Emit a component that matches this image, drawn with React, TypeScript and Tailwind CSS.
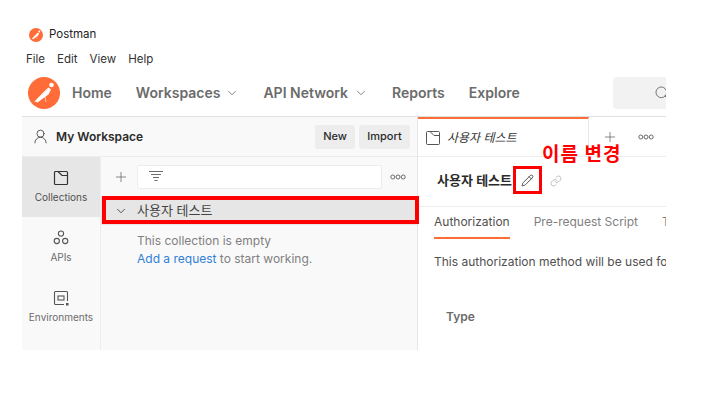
import { Search, ChevronDown, Plus, Link, Pencil, UserRound } from 'lucide-react'

const font = "[font-family:Inter,'Noto_Sans_CJK_KR',sans-serif]"

function Logo({ size }: { size: number }) {
  return (
    <svg width={size} height={size} viewBox="0 0 32 32">
      <circle cx="16" cy="16" r="16" fill="#ff6c37" />
      <path d="M6.5 24.5 L16 14.5 L20.5 10.5 L23 12.5 L20.5 17.5 L17 20 L9.5 25.5 Z" fill="#fff" />
      <circle cx="23.5" cy="8" r="2.3" fill="#fff" />
      <path d="M17 20 L18 25 M14 18 L19 13" stroke="#ffd9cb" strokeWidth="0.8" fill="none" />
    </svg>
  )
}

function CollectionIcon() {
  return (
    <svg width="16" height="16" viewBox="0 0 16 16" fill="none" stroke="#333" strokeWidth="1.2">
      <rect x="1.5" y="1.5" width="13" height="13" rx="1" />
      <path d="M5 1.5 L9 5.5 H14.5" />
    </svg>
  )
}

function ApisIcon() {
  return (
    <svg width="16" height="16" viewBox="0 0 16 16" fill="none" stroke="#555" strokeWidth="1.1">
      <circle cx="8" cy="3.6" r="2.6" />
      <circle cx="3.8" cy="11" r="2.6" />
      <circle cx="12.2" cy="11" r="2.6" />
    </svg>
  )
}

function EnvIcon() {
  return (
    <svg width="16" height="16" viewBox="0 0 16 16" fill="none" stroke="#555" strokeWidth="1.1">
      <path d="M11 14.5 H2.5 a1 1 0 0 1 -1 -1 V2.5 a1 1 0 0 1 1 -1 H13.5 a1 1 0 0 1 1 1 V11" />
      <rect x="5" y="6" width="6" height="4" />
      <rect x="13" y="13" width="2.5" height="2.5" fill="#555" stroke="none" />
    </svg>
  )
}

function FilterIcon() {
  return (
    <svg width="16" height="14" viewBox="0 0 16 14" stroke="#6b6b6b" strokeWidth="1">
      <path d="M1 1.5 H15 M3 4.5 H13 M5 7.5 H11 M6.5 10.5 H9.5" />
    </svg>
  )
}

function Dots() {
  return (
    <svg width="16" height="6" viewBox="0 0 16 6" fill="none" stroke="#6b6b6b" strokeWidth="1">
      <circle cx="2.8" cy="3" r="2" />
      <circle cx="8" cy="3" r="2" />
      <circle cx="13.2" cy="3" r="2" />
    </svg>
  )
}

function SideItem({ icon, label, active }: { icon: React.ReactNode; label: string; active?: boolean }) {
  return (
    <div className={`h-[60px] flex flex-col items-center pt-[13px] gap-[4px] ${active ? 'bg-[#e6e6e6]' : ''}`}>
      {icon}
      <span className={`text-[10px] leading-[14px] ${active ? 'text-[#505050]' : 'text-[#6b6b6b]'}`}>{label}</span>
    </div>
  )
}

export default function App() {
  return (
    <div className={`relative w-[706px] h-[400px] bg-white overflow-hidden ${font}`}>
      <div className="ml-[22px] w-[644px]">
        <div className="h-[42px] flex items-end pl-[7px] gap-[6px]">
          <Logo size={14} />
          <span className="text-[11.5px] leading-[16px] text-[#222]">Postman</span>
        </div>
        <div className="h-[28px] pl-[4px] pt-[9px] flex gap-[12px] text-[11.5px] leading-[16px] text-[#333]">
          <span>File</span>
          <span>Edit</span>
          <span>View</span>
          <span>Help</span>
        </div>

        <nav className="h-[47px] flex items-center pl-[6px] border-b border-[#e0e0e0] overflow-hidden">
          <Logo size={32} />
          <div className="ml-[12px] pb-[1px] flex items-center text-[14px] font-semibold text-[#6b6b6b] whitespace-nowrap">
            <span>Home</span>
            <span className="ml-[24px]">Workspaces</span>
            <ChevronDown size={14} strokeWidth={1.2} className="ml-[5px] text-[#555]" />
            <span className="ml-[24px]">API Network</span>
            <ChevronDown size={14} strokeWidth={1.2} className="ml-[6px] text-[#555]" />
            <span className="ml-[24px]">Reports</span>
            <span className="ml-[24px]">Explore</span>
          </div>
          <div className="ml-auto w-[53px] h-[32px] bg-[#f2f2f2] rounded-l-[4px] flex items-center justify-end overflow-hidden">
            <Search size={16} strokeWidth={1.2} className="text-[#555] -mr-[4px] shrink-0" />
          </div>
        </nav>

        <div className="flex h-[233px]">
          <aside className="w-[396px] bg-[#f9f9f9] border-r border-[#e6e6e6] flex flex-col">
            <div className="h-[40px] flex items-center pl-[10px] pr-[7px] border-b border-[#ededed]">
              <UserRound size={17} strokeWidth={1.1} className="text-[#333]" />
              <span className="ml-[7px] text-[12px] font-semibold text-[#2b2b2b]">My Workspace</span>
              <button className="ml-auto h-[24px] w-[40px] rounded-[3px] bg-[#ededed] text-[11px] font-medium text-[#2b2b2b]">New</button>
              <button className="ml-[4px] h-[24px] w-[51px] rounded-[3px] bg-[#ededed] text-[11px] font-medium text-[#2b2b2b]">Import</button>
            </div>
            <div className="flex flex-1">
              <div className="w-[79px] border-r border-[#ededed]">
                <SideItem icon={<CollectionIcon />} label="Collections" active />
                <SideItem icon={<ApisIcon />} label="APIs" />
                <SideItem icon={<EnvIcon />} label="Environments" />
              </div>
              <div className="flex-1">
                <div className="h-[40px] flex items-center pl-[12px] pr-[11px]">
                  <Plus size={16} strokeWidth={1.3} className="text-[#777]" />
                  <div className="ml-[8px] w-[245px] h-[24px] bg-white border border-[#ededed] rounded-[2px] flex items-center pl-[10px]">
                    <FilterIcon />
                  </div>
                  <div className="ml-auto"><Dots /></div>
                </div>
                <div className="h-[28px] bg-[#e6e6e6] flex items-center pl-[13px]">
                  <ChevronDown size={14} strokeWidth={1.3} className="text-[#222]" />
                  <span className="ml-[9px] text-[13px] text-[#444]">사용자 테스트</span>
                </div>
                <div className="pl-[36px] pt-[7px] text-[12px] leading-[18px] text-[#808080]">
                  <p>This collection is empty</p>
                  <p><span className="text-[#2f80d8]">Add a request</span> to start working.</p>
                </div>
              </div>
            </div>
          </aside>

          <main className="flex-1 min-w-0 overflow-hidden">
            <div className="h-[40px] flex items-center border-b border-[#ededed]">
              <div className="w-[171px] h-[40px] border-t-2 border-[#ff6c37] border-r border-r-[#e6e6e6] flex items-center pl-[8px] gap-[7px]">
                <svg width="14" height="14" viewBox="0 0 14 14" fill="none" stroke="#555" strokeWidth="1">
                  <rect x="0.5" y="0.5" width="13" height="13" rx="1" />
                  <path d="M4 0.5 L8 4.5 H13.5" />
                </svg>
                <span className="text-[12px] italic text-[#333]">사용자 테스트</span>
              </div>
              <Plus size={16} strokeWidth={1.3} className="ml-[13px] text-[#777]" />
              <div className="ml-[20px]"><Dots /></div>
            </div>
            <div className="h-[50px] flex items-center pl-[19px] pb-[2px] border-b border-[#ededed]">
              <span className="text-[13px] font-semibold text-[#2b2b2b]">사용자 테스트</span>
              <Pencil size={13} strokeWidth={1.4} className="ml-[9px] text-[#222]" />
              <Link size={12} strokeWidth={1.2} className="ml-[16px] text-[#999]" />
            </div>
            <div className="h-[32px] flex pl-[16px] text-[12px] whitespace-nowrap">
              <span className="h-[32px] pt-[6px] border-b-2 border-[#ff6c37] text-[#505050]">Authorization</span>
              <span className="ml-[24px] pt-[6px] text-[#808080]">Pre-request Script</span>
              <span className="ml-[24px] pt-[6px] text-[#808080]">Tests</span>
            </div>
            <p className="pl-[16px] pt-[14px] text-[12px] leading-[18px] text-[#505050] whitespace-nowrap">This authorization method will be used for every request in this collection.</p>
            <p className="pl-[28px] pt-[38px] text-[12px] leading-[16px] font-semibold text-[#6b6b6b]">Type</p>
          </main>
        </div>
      </div>

      {/* red annotations on top of the screenshot */}
      <div className="absolute left-[102px] top-[196px] w-[317px] h-[28px] border-[4px] border-[#ff0000]" />
      <div className="absolute left-[513px] top-[166px] w-[29px] h-[28px] border-[3px] border-[#ff0000]" />
      <span className="absolute left-[542px] top-[144px] text-[19px] leading-[22px] font-bold text-[#ff0000] tracking-[1px]">이름 변경</span>
    </div>
  )
}
